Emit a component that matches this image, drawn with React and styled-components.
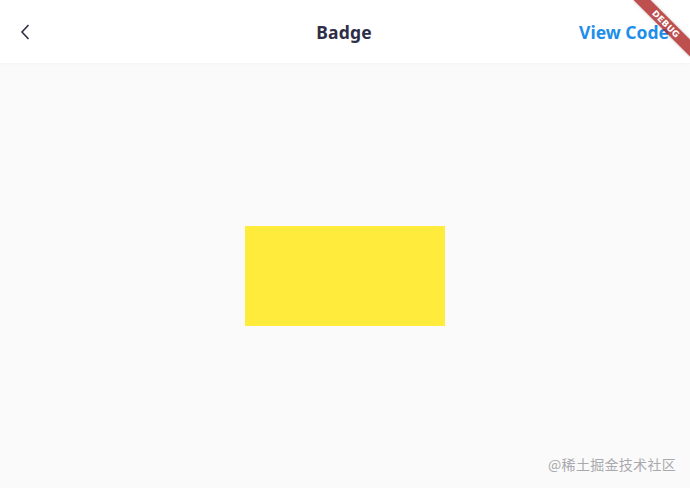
import styled, { createGlobalStyle } from "styled-components"

const Global = createGlobalStyle`
  html, body {
    margin: 0;
    padding: 0;
    background: #fafafa;
    font-family: "Noto Sans", "Open Sans", sans-serif;
  }
`

const Page = styled.div`
  position: relative;
  width: 690px;
  height: 488px;
  display: flex;
  flex-direction: column;
  overflow: hidden;
  background: #fafafa;
`

const Header = styled.header`
  height: 63px;
  flex-shrink: 0;
  background: #ffffff;
  display: grid;
  grid-template-columns: 1fr auto 1fr;
  align-items: center;
  padding: 0 21px 0 16px;
  box-shadow: 0 1px 2px rgba(0, 0, 0, 0.03);
`

const BackButton = styled.button`
  justify-self: start;
  border: none;
  background: transparent;
  padding: 0;
  width: 18px;
  height: 18px;
  display: flex;
  align-items: center;
  justify-content: center;
  cursor: pointer;
`

const Title = styled.h1`
  margin: 0 0 0 3px;
  font-size: 17.5px;
  font-weight: 700;
  color: #2f2e47;
  letter-spacing: 0.2px;
`

const ViewCode = styled.a`
  justify-self: end;
  font-size: 17.5px;
  font-weight: 700;
  color: #1e8ee8;
  text-decoration: none;
`

const Body = styled.main`
  flex: 1;
  display: flex;
  align-items: center;
  justify-content: center;
`

const BadgeBox = styled.div`
  width: 200px;
  height: 100px;
  background: #ffeb3b;
  margin-top: 1px;
`

const Watermark = styled.div`
  position: absolute;
  right: 14px;
  bottom: 14px;
  font-family: "Noto Sans CJK SC", "Noto Sans", sans-serif;
  font-size: 14px;
  color: #a9a9ad;
  letter-spacing: 0.3px;
`

const DebugBanner = styled.div`
  position: absolute;
  top: 18px;
  right: -16px;
  width: 80px;
  height: 12px;
  background: rgba(170, 30, 30, 0.78);
  transform: rotate(45deg);
  display: flex;
  align-items: center;
  justify-content: center;
  color: #ffffff;
  font-family: "DejaVu Sans", sans-serif;
  font-weight: 900;
  font-size: 8.5px;
  letter-spacing: 0.4px;
  box-shadow: 0 0 3px rgba(0, 0, 0, 0.25);
`

const App = () => {
  return (
    <Page>
      <Global />
      <Header>
        <BackButton aria-label="Back">
          <svg width="10" height="16" viewBox="0 0 10 16">
            <path d="M8.5 1 L2 8 L8.5 15" fill="none" stroke="#2f2e47" strokeWidth="1.6" />
          </svg>
        </BackButton>
        <Title>Badge</Title>
        <ViewCode href="#">View Code</ViewCode>
      </Header>
      <Body>
        <BadgeBox />
      </Body>
      <Watermark>@稀土掘金技术社区</Watermark>
      <DebugBanner>DEBUG</DebugBanner>
    </Page>
  )
}

export default App
